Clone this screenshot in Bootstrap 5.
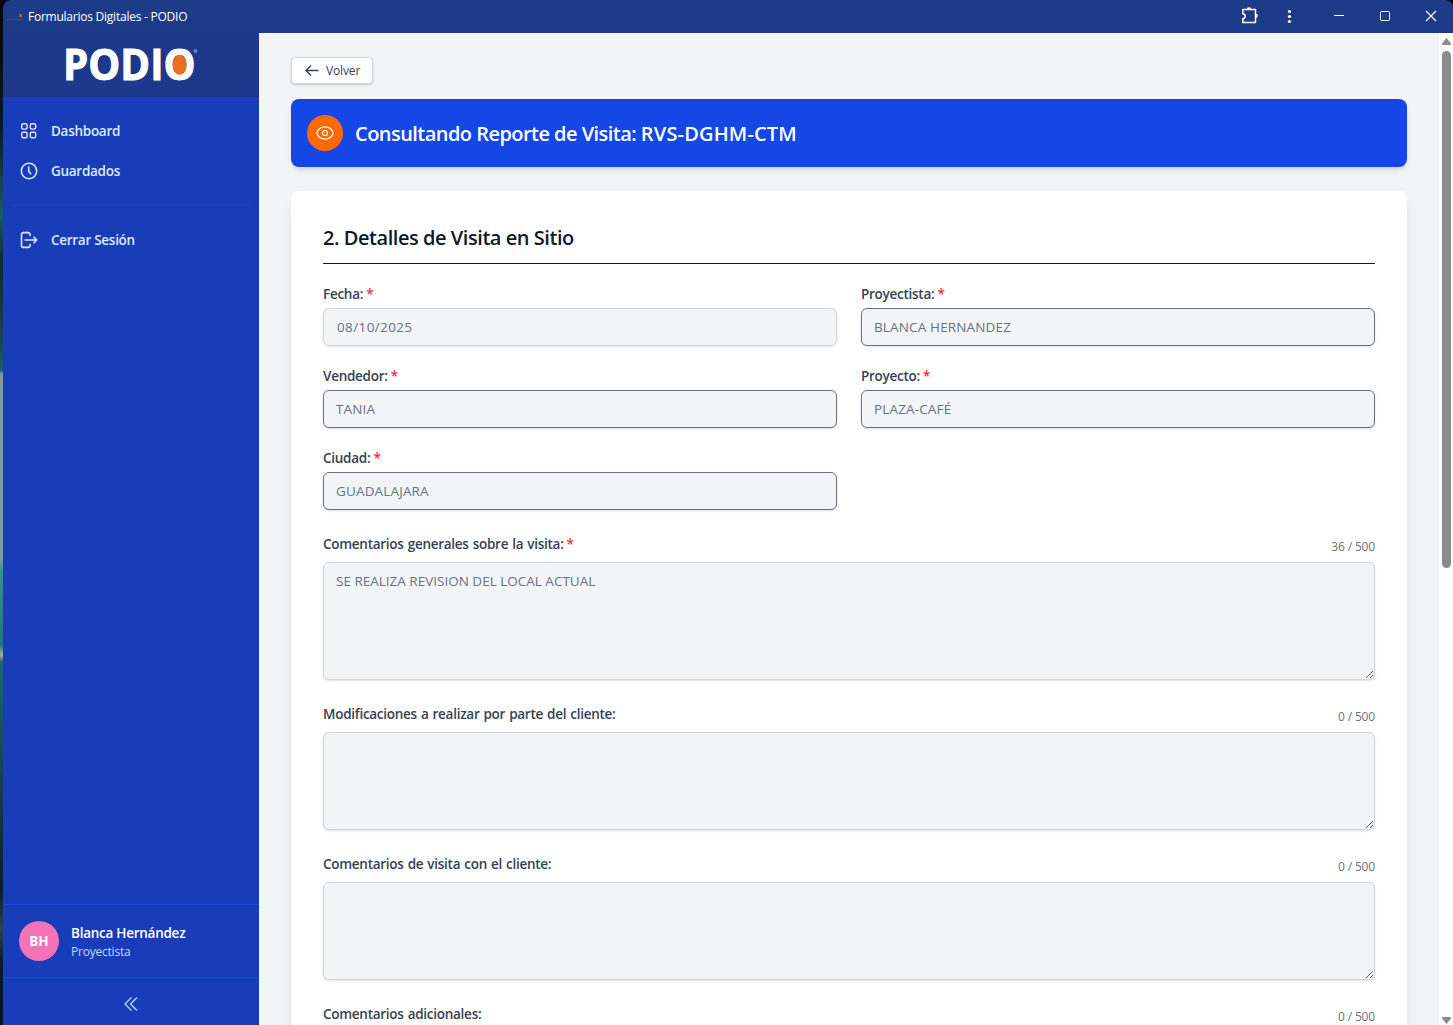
<!DOCTYPE html>
<html lang="es">
<head>
<meta charset="utf-8">
<title>Formularios Digitales - PODIO</title>
<link href="https://cdn.jsdelivr.net/npm/bootstrap@5.3.0/dist/css/bootstrap.min.css" rel="stylesheet">
<style>
  body { font-family: "Open Sans", "Noto Sans", sans-serif; font-size: 14px; line-height: 20px; color: #364153; background: #0c1c2c; overflow: hidden; }
  .desktop { height: 1025px; padding-left: 3px; background: linear-gradient(#05080c 0, #0a1a2a 130px, #1b5a70 215px, #0c2a3c 260px, #143e54 330px, #1b5a70 370px, #7d9c9c 374px, #7d9c9c 560px, #3a8f96 570px, #1e7484 645px, #a3ada0 655px, #1e6478 662px, #123a52 800px, #0c1c2c 890px, #2a4450 930px, #0c1a28 960px, #0a1420 1025px); }
  .app-window { border-radius: 8px 8px 0 0; overflow: hidden; }
  .titlebar { height: 33px; background: #1e3b8a; color: #fff; font-size: 12px; }
  .titlebar svg, .side svg, .pane svg { display: block; flex: none; }
  .title-text { letter-spacing: -.24px; margin-left: 5px; }
  .side { width: 256px; background: #193cb8; color: #dbeafe; }
  .brand { height: 64px; background: #1e398b; }
  .side-link { height: 36px; padding: 0 8px; gap: 12px; color: #dbeafe; font-weight: 600; font-size: 13.5px; letter-spacing: -.28px; }
  .line-top { border-top: 1px solid #1447e6; }
  .line-soft { border-top-color: #1743d8; }
  .user-name { font-size: 13.5px; letter-spacing: -.26px; }
  .user-role { font-size: 12px; line-height: 16px; font-weight: 500; letter-spacing: -.22px; color: #bedbff; padding-top: 1px; margin-bottom: -1px; }
  .avatar { width: 40px; height: 40px; border-radius: 50%; background: #f472b6; color: #fff; font-weight: 700; font-size: 13.5px; }
  .collapse-bar { height: 48px; padding-top: 16px; }
  .pane { background: #f3f4f6; padding: 24px 32px 0; overflow: hidden; }
  .back-btn { width: 82px; height: 27px; background: #fff; border: 1px solid #d1d5dc; border-radius: 4px; font-size: 12px; font-weight: 500; color: #364153; padding: 0 12px 0 13px; box-shadow: 0 1px 3px rgba(0,0,0,.1), 0 1px 2px rgba(0,0,0,.08); margin-bottom: 15px; letter-spacing: -.15px; }
  .back-btn span { margin-left: 7px; }
  .banner { height: 68px; background: #1447e6; color: #fff; border-radius: 8px; padding: 16px; gap: 12px; box-shadow: 0 4px 6px -1px rgba(0,0,0,.1), 0 2px 4px -2px rgba(0,0,0,.1); margin-bottom: 24px; }
  .banner h1 { font-size: 20px; font-weight: 600; line-height: 28px; letter-spacing: -.54px; padding-top: 2px; }
  .banner .folio { letter-spacing: .16px; }
  .eye { width: 36px; height: 36px; border-radius: 50%; background: #ff6900; }
  .sheet { background: #fff; border-radius: 8px; padding: 32px; height: 1100px; box-shadow: 0 10px 15px -3px rgba(0,0,0,.1), 0 4px 6px -4px rgba(0,0,0,.1); }
  .sheet h2 { font-size: 20px; line-height: 28px; font-weight: 600; color: #101828; padding: 1px 0 11px; border-bottom: 1px solid #101828; margin-bottom: 20px; letter-spacing: -.45px; }
  .lbl { font-weight: 600; font-size: 13.5px; letter-spacing: -.27px; word-spacing: .8px; white-space: nowrap; }
  .req { color: #fb2c36; margin-left: -1px; }
  .fields { --bs-gutter-y: 20px; }
  .box { background: #f3f4f6; border: 1px solid #d1d5dc; border-radius: 6px; color: #6a7282; font-size: 13.5px; line-height: 20px; padding: 8px 12px; box-shadow: 0 1px 3px rgba(0,0,0,.1), 0 1px 2px -1px rgba(0,0,0,.1); }
  .box-line { height: 38px; margin-top: 4px; letter-spacing: .15px; }
  .box-date { padding-left: 13px; letter-spacing: .38px; }
  .box-dark { border-color: #6a7282; }
  .box-area { resize: vertical; overflow: hidden; height: 98px; margin-top: 8px; }
  .box-tall { height: 118px; }
  .block { margin-top: 24px; }
  .cnt { font-size: 12px; line-height: 14px; color: #6a7282; letter-spacing: -.16px; }
  .scroller { width: 14px; background: #fcfcfc; padding: 5px 2px 1px 3px; }
  .thumb { width: 9px; height: 517px; border-radius: 5px; background: #8b8b8b; margin-top: 5px; }
</style>
</head>
<body>
<div class="desktop">
 <div class="app-window d-flex flex-column h-100">
  <header class="titlebar d-flex align-items-center flex-shrink-0">
    <svg class="ms-1" width="16" height="8" viewBox="0 0 16 8"><path d="M0 3.500h12" stroke="#1f4580"/><path d="M0 6.500h15" stroke="#3c5080"/><rect x="12.500" y="1" width="2" height="3" fill="#e8632a"/></svg>
    <span class="title-text">Formularios Digitales - PODIO</span>
    <div class="ms-auto d-flex align-items-center">
      <svg width="212" height="33" viewBox="1241 0 212 33" fill="none" stroke="#fff">
        <path d="M1242.800 9.500h12.700v13h-12.700v-3.900a2.300 2.300 0 0 0 0-4.800z" stroke-width="1.500" stroke-linejoin="round"/>
        <path d="M1246.800 9.500a2.300 2.300 0 0 1 4.600 0zM1255.500 13.500a2.300 2.300 0 0 1 0 4.600z" fill="#fff" stroke="none"/>
        <g fill="#fff" stroke="none"><circle cx="1289.500" cy="11.500" r="1.600"/><circle cx="1289.500" cy="16.500" r="1.600"/><circle cx="1289.500" cy="21.500" r="1.600"/></g>
        <path d="M1334 15.500h10"/><rect x="1380.500" y="11.500" width="9" height="9" rx="1"/><path d="M1426 11l10 10M1436 11l-10 10" stroke-width="1.200"/>
      </svg>
    </div>
  </header>
  <div class="d-flex flex-grow-1 overflow-hidden">
    <aside class="side d-flex flex-column flex-shrink-0">
      <div class="brand">
        <svg width="256" height="64" viewBox="3 33 256 64" font-family="Open Sans, sans-serif" font-weight="700" font-size="43" fill="#fff">
          <text x="63" y="80" textLength="132.500" lengthAdjust="spacingAndGlyphs" stroke="#fff" stroke-width=".9">PODIO</text>
          <ellipse cx="179.600" cy="64.800" rx="7" ry="10" fill="#f06c22"/>
          <circle cx="195.500" cy="51" r="1.500" fill="none" stroke="#c5cde4" stroke-width=".6"/><circle cx="195.500" cy="51" r=".5" fill="#c5cde4"/>
        </svg>
      </div>
      <nav class="d-flex flex-column px-2 pt-3 gap-1">
        <a class="side-link d-flex align-items-center text-decoration-none" href="#">
          <svg width="20" height="20" viewBox="0 0 20 20" fill="none" stroke="currentColor" stroke-width="1.400"><rect x="2.700" y="2.700" width="5.400" height="5.400" rx="1.500"/><rect x="11.300" y="2.700" width="5.400" height="5.400" rx="1.500"/><rect x="2.700" y="11.300" width="5.400" height="5.400" rx="1.500"/><rect x="11.300" y="11.300" width="5.400" height="5.400" rx="1.500"/></svg>
          <span>Dashboard</span></a>
        <a class="side-link d-flex align-items-center text-decoration-none" href="#">
          <svg width="20" height="20" viewBox="0 0 20 20" fill="none" stroke="currentColor" stroke-width="1.600"><circle cx="10" cy="10" r="7.700"/><path d="M9.700 5.500v4.700l2.300 3"/></svg>
          <span>Guardados</span></a>
      </nav>
      <div class="mx-2 mt-3 pt-3 line-top line-soft">
        <a class="side-link px-0 ms-2 d-flex align-items-center text-decoration-none" href="#">
          <svg width="20" height="20" viewBox="0 0 20 20" fill="none" stroke="currentColor" stroke-width="1.600"><path d="M11 6V4.500A2 2 0 0 0 9 2.600H4.500a2 2 0 0 0-2 2v10.800a2 2 0 0 0 2 2H9a2 2 0 0 0 2-1.900V14M5.500 10h12M14.500 6.800l3.100 3.200-3.100 3.200"/></svg>
          <span>Cerrar Sesión</span></a>
      </div>
      <div class="mt-auto line-top d-flex align-items-center gap-2 p-3">
        <div class="avatar d-flex align-items-center justify-content-center">BH</div>
        <div class="ms-1">
          <div class="text-white fw-semibold user-name">Blanca Hernández</div>
          <div class="user-role">Proyectista</div>
        </div>
      </div>
      <div class="line-top d-flex justify-content-center collapse-bar">
        <svg width="20" height="20" viewBox="0 0 20 20" fill="none" stroke="#bedbff" stroke-width="1.300"><path d="M10.500 3.500 4 10l6.500 6.500M16 3.500 9.500 10l6.500 6.500"/></svg>
      </div>
    </aside>
    <main class="pane flex-grow-1">
      <button class="back-btn d-flex align-items-center"><svg width="14" height="14" viewBox="0 0 14 14" fill="none" stroke="currentColor" stroke-width="1.400"><path d="M13.500 6.500H1M6 1.500l-5 5 5 5"/></svg><span>Volver</span></button>
      <div class="banner d-flex align-items-center">
        <div class="eye d-flex align-items-center justify-content-center"><svg width="20" height="20" viewBox="0 0 20 20" fill="none" stroke="#fff" stroke-width="1.200"><path d="M1.700 10C3 6.200 6.200 3.900 10 3.900s7 2.300 8.300 6.100c-1.300 3.800-4.500 6.100-8.300 6.100S3 13.800 1.700 10z"/><circle cx="10" cy="10" r="2.500"/></svg></div>
        <h1 class="m-0">Consultando Reporte de Visita: <span class="folio">RVS-DGHM-CTM</span></h1>
      </div>
      <section class="sheet">
        <h2>2. Detalles de Visita en Sitio</h2>
        <div class="row fields">
          <div class="col-6"><div class="lbl">Fecha: <span class="req">*</span></div><div class="box box-line box-date">08/10/2025</div></div>
          <div class="col-6"><div class="lbl">Proyectista: <span class="req">*</span></div><div class="box box-line box-dark">BLANCA HERNANDEZ</div></div>
          <div class="col-6"><div class="lbl">Vendedor: <span class="req">*</span></div><div class="box box-line box-dark">TANIA</div></div>
          <div class="col-6"><div class="lbl">Proyecto: <span class="req">*</span></div><div class="box box-line box-dark">PLAZA-CAFÉ</div></div>
          <div class="col-6"><div class="lbl">Ciudad: <span class="req">*</span></div><div class="box box-line box-dark">GUADALAJARA</div></div>
        </div>
        <div class="block"><div class="d-flex justify-content-between align-items-end"><div class="lbl">Comentarios generales sobre la visita: <span class="req">*</span></div><div class="cnt">36 / 500</div></div><div class="box box-area box-tall">SE REALIZA REVISION DEL LOCAL ACTUAL</div></div>
        <div class="block"><div class="d-flex justify-content-between align-items-end"><div class="lbl">Modificaciones a realizar por parte del cliente:</div><div class="cnt">0 / 500</div></div><div class="box box-area"></div></div>
        <div class="block"><div class="d-flex justify-content-between align-items-end"><div class="lbl">Comentarios de visita con el cliente:</div><div class="cnt">0 / 500</div></div><div class="box box-area"></div></div>
        <div class="block"><div class="d-flex justify-content-between align-items-end"><div class="lbl">Comentarios adicionales:</div><div class="cnt">0 / 500</div></div><div class="box box-area"></div></div>
      </section>
    </main>
    <div class="scroller d-flex flex-column flex-shrink-0">
      <svg width="9" height="8" viewBox="0 0 9 8" fill="#8b8b8b"><path d="M4.500 0 9 5.500Q9 7 8 7H1Q0 7 0 5.500z"/></svg>
      <div class="thumb"></div>
      <svg class="mt-auto" width="9" height="7" viewBox="0 0 9 7" fill="#8b8b8b"><path d="M4.500 7 9 1.500Q9 0 8 0H1Q0 0 0 1.500z"/></svg>
    </div>
  </div>
 </div>
</div>
<script src="https://cdn.jsdelivr.net/npm/bootstrap@5.3.0/dist/js/bootstrap.bundle.min.js"></script>
</body>
</html>
